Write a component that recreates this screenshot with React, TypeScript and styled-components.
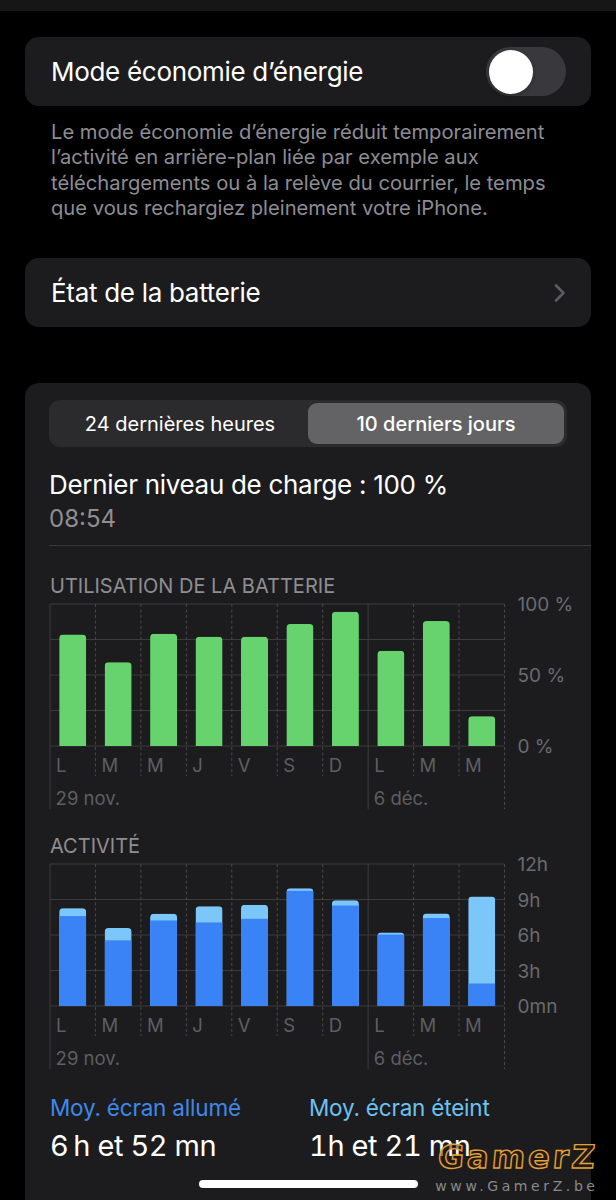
import React from 'react';
import styled, { createGlobalStyle } from 'styled-components';

const GlobalStyle = createGlobalStyle`
  html, body {
    margin: 0;
    padding: 0;
    background: #000;
  }
  body {
    font-family: Inter, "Noto Sans", sans-serif;
    color: #fff;
    -webkit-font-smoothing: antialiased;
  }
  #root {
    position: relative;
    height: 1200px;
    overflow: hidden;
  }
`;

const COL = 45.45;
const PLOT_W = COL * 10;
const PLOT_H = 142;
const BAR_W = 27;
const BAR_OFF = 9.2;
const DAYS = ['L', 'M', 'M', 'J', 'V', 'S', 'D', 'L', 'M', 'M'];

type Segment = { value: number; color: string };

const battery: Segment[][] = [78.5, 59, 79, 77, 77, 86, 94.5, 67, 88, 21].map((v) => [
  { value: v, color: '#66d36e' },
]);

const activity: Segment[][] = [
  [7.6, 8.27],
  [5.55, 6.6],
  [7.23, 7.8],
  [7.06, 8.43],
  [7.37, 8.55],
  [9.73, 9.95],
  [8.49, 8.94],
  [6.03, 6.22],
  [7.43, 7.82],
  [1.9, 9.25],
].map(([dark, total]) => [
  { value: total, color: '#7cc7f9' },
  { value: dark, color: '#3a83f6' },
]);

function topRounded(x: number, y: number, w: number, h: number, r: number) {
  return `M${x},${y + h} L${x},${y + r} A${r},${r} 0 0 1 ${x + r},${y} L${x + w - r},${y} A${r},${r} 0 0 1 ${x + w},${y + r} L${x + w},${y + h} Z`;
}

type ChartProps = {
  id: string;
  max: number;
  bars: Segment[][];
  yLabels: { at: number; text: string }[];
};

function Chart({ id, max, bars, yLabels }: ChartProps) {
  const scale = PLOT_H / max;
  return (
    <ChartSvg width={PLOT_W + 80} height={PLOT_H + 63}>
      <defs>
        {bars.map((segs, i) => {
          const h = segs[0].value * scale;
          return (
            <clipPath id={`${id}-${i}`} key={i}>
              <path d={topRounded(i * COL + BAR_OFF, PLOT_H - h, BAR_W, h, 4)} />
            </clipPath>
          );
        })}
      </defs>

      {[0, 1, 2, 3, 4].map((k) => (
        <line key={k} x1={0} x2={PLOT_W} y1={(PLOT_H / 4) * k} y2={(PLOT_H / 4) * k} stroke="#3b3b3e" strokeWidth={1} />
      ))}

      {Array.from({ length: 11 }).map((_, k) => {
        const x = k * COL;
        const solid = k === 0 || k === 7;
        const long = solid || k === 10;
        return (
          <line
            key={k}
            x1={x}
            x2={x}
            y1={0}
            y2={long ? PLOT_H + 63 : PLOT_H + 30}
            stroke={solid ? '#3b3b3e' : '#4e4548'}
            strokeWidth={1}
            strokeDasharray={solid ? undefined : '3 2.5'}
          />
        );
      })}

      {bars.map((segs, i) => (
        <g key={i} clipPath={`url(#${id}-${i})`}>
          {segs.map((s, j) => (
            <rect key={j} x={i * COL + BAR_OFF} y={PLOT_H - s.value * scale} width={BAR_W} height={s.value * scale} fill={s.color} />
          ))}
        </g>
      ))}

      {DAYS.map((d, i) => (
        <AxisText key={i} x={i * COL + 6} y={PLOT_H + 19}>
          {d}
        </AxisText>
      ))}
      <AxisText x={5.6} y={PLOT_H + 52}>29 nov.</AxisText>
      <AxisText x={7 * COL + 5.6} y={PLOT_H + 52}>6 déc.</AxisText>

      {yLabels.map((l) => (
        <ScaleText key={l.text} x={PLOT_W + 13} y={(PLOT_H / 4) * l.at + 0.5}>
          {l.text}
        </ScaleText>
      ))}
    </ChartSvg>
  );
}

export default function App() {
  return (
    <>
      <GlobalStyle />
      <TopBar />
      <Content>
        <RowCard>
          <RowLabel>Mode économie d’énergie</RowLabel>
          <Toggle>
            <Knob />
          </Toggle>
        </RowCard>
        <Footnote>
          Le mode économie d’énergie réduit temporairement
          <br />
          l’activité en arrière-plan liée par exemple aux
          <br />
          téléchargements ou à la relève du courrier, le temps
          <br />
          que vous rechargiez pleinement votre iPhone.
        </Footnote>

        <RowCard $gap={38}>
          <RowLabel>État de la batterie</RowLabel>
          <svg width="13" height="20" viewBox="0 0 13 20">
            <polyline points="3,2.5 10.5,10 3,17.5" fill="none" stroke="#5b5b60" strokeWidth="2.6" strokeLinecap="round" strokeLinejoin="round" />
          </svg>
        </RowCard>

        <UsageCard>
          <Segmented>
            <SegmentItem>24 dernières heures</SegmentItem>
            <SegmentItem $active>10 derniers jours</SegmentItem>
          </Segmented>

          <ChargeTitle>Dernier niveau de charge : 100 %</ChargeTitle>
          <ChargeTime>08:54</ChargeTime>
          <Separator />

          <ChartTitle>UTILISATION DE LA BATTERIE</ChartTitle>
          <Chart
            id="bat"
            max={100}
            bars={battery}
            yLabels={[
              { at: 0, text: '100 %' },
              { at: 2, text: '50 %' },
              { at: 4, text: '0 %' },
            ]}
          />

          <ChartTitle $gap={26}>ACTIVITÉ</ChartTitle>
          <Chart
            id="act"
            max={12}
            bars={activity}
            yLabels={[
              { at: 0, text: '12h' },
              { at: 1, text: '9h' },
              { at: 2, text: '6h' },
              { at: 3, text: '3h' },
              { at: 4, text: '0mn' },
            ]}
          />

          <Stats>
            <Stat>
              <StatLabel $color="#3f88e8">Moy. écran allumé</StatLabel>
              <StatValue>6&#8201;h et 52 mn</StatValue>
            </Stat>
            <Stat>
              <StatLabel $color="#6cc2f0">Moy. écran éteint</StatLabel>
              <StatValue>1h et 21 mn</StatValue>
            </Stat>
          </Stats>
        </UsageCard>
      </Content>

      <HomeIndicator />
      <Watermark>
        <WatermarkLogo>GamerZ</WatermarkLogo>
        <WatermarkUrl>www.GamerZ.be</WatermarkUrl>
      </Watermark>
    </>
  );
}

const TopBar = styled.div`
  height: 11px;
  background: #161617;
`;

const Content = styled.div`
  padding: 26px 25px 0;
`;

const Card = styled.div`
  background: #1c1c1e;
  border-radius: 14px;
`;

const RowCard = styled(Card)<{ $gap?: number }>`
  margin-top: ${(p) => p.$gap ?? 0}px;
  height: 69px;
  box-sizing: border-box;
  padding: 0 25px 0 26px;
  display: flex;
  align-items: center;
  justify-content: space-between;
`;

const RowLabel = styled.div`
  font-size: 26px;
  letter-spacing: -0.3px;
  color: #fff;
`;

const Toggle = styled.div`
  width: 80px;
  height: 49px;
  border-radius: 25px;
  background: #39393d;
  box-sizing: border-box;
  padding: 0 2.5px;
  display: flex;
  align-items: center;
`;

const Knob = styled.div`
  width: 44px;
  height: 44px;
  border-radius: 50%;
  background: #fff;
  box-shadow: 0 2px 4px rgba(0, 0, 0, 0.25);
`;

const Footnote = styled.p`
  margin: 0;
  padding: 13px 26px 0;
  font-size: 20.2px;
  line-height: 25.3px;
  color: #8d8d93;
`;

const UsageCard = styled(Card)`
  margin-top: 56px;
  padding: 17px 24px 80px;
`;

const Segmented = styled.div`
  height: 47px;
  box-sizing: border-box;
  padding: 3px;
  border-radius: 11px;
  background: #2b2b2e;
  display: grid;
  grid-template-columns: 1fr 1fr;
`;

const SegmentItem = styled.div<{ $active?: boolean }>`
  display: flex;
  align-items: center;
  justify-content: center;
  border-radius: 9px;
  font-size: 20px;
  font-weight: ${(p) => (p.$active ? 500 : 400)};
  color: #fff;
  background: ${(p) => (p.$active ? '#636366' : 'transparent')};
`;

const ChargeTitle = styled.div`
  margin-top: 22px;
  font-size: 26px;
  line-height: 32px;
  letter-spacing: -0.3px;
`;

const ChargeTime = styled.div`
  margin-top: 3px;
  font-size: 24px;
  line-height: 30px;
  color: #8e8e93;
`;

const Separator = styled.div`
  margin: 11px -24px 0 0;
  height: 1px;
  background: #38383a;
`;

const ChartTitle = styled.div<{ $gap?: number }>`
  margin: ${(p) => p.$gap ?? 29}px 0 0 1px;
  font-size: 20px;
  line-height: 22px;
  color: #8e8e93;
`;

const ChartSvg = styled.svg`
  display: block;
  margin: 7px 0 0 1px;
  overflow: visible;
`;

const AxisText = styled.text`
  font-family: Inter, "Noto Sans", sans-serif;
  font-size: 18.5px;
  fill: #5e5e63;
  dominant-baseline: central;
`;

const ScaleText = styled.text`
  font-family: Inter, "Noto Sans", sans-serif;
  font-size: 19px;
  fill: #6a6a6f;
  dominant-baseline: central;
`;

const Stats = styled.div`
  margin: 26px 0 0 1px;
  display: grid;
  grid-template-columns: 259px 1fr;
`;

const Stat = styled.div`
  display: flex;
  flex-direction: column;
  gap: 8px;
`;

const StatLabel = styled.div<{ $color: string }>`
  font-size: 22.5px;
  line-height: 26px;
  letter-spacing: -0.2px;
  color: ${(p) => p.$color};
`;

const StatValue = styled.div`
  font-size: 29px;
  line-height: 34px;
  letter-spacing: -0.4px;
  font-variant-numeric: tabular-nums;
  color: #fff;
`;

const HomeIndicator = styled.div`
  position: absolute;
  left: 50%;
  bottom: 12px;
  width: 219px;
  height: 8px;
  margin-left: -109.5px;
  border-radius: 4px;
  background: #fff;
`;

const Watermark = styled.div`
  position: absolute;
  right: 21px;
  bottom: 7px;
  display: flex;
  flex-direction: column;
  align-items: flex-end;
  font-family: "DejaVu Sans", sans-serif;
`;

const WatermarkLogo = styled.div`
  font-size: 32px;
  line-height: 30px;
  font-weight: 700;
  letter-spacing: 3px;
  margin-right: -3px;
  color: rgba(40, 25, 5, 0.55);
  -webkit-text-stroke: 1.4px #e2a03a;
  transform: skewX(-5deg);
`;

const WatermarkUrl = styled.div`
  margin-top: 7px;
  font-size: 14px;
  line-height: 14px;
  letter-spacing: 3.6px;
  margin-right: -3.6px;
  color: #8a8a8a;
`;
